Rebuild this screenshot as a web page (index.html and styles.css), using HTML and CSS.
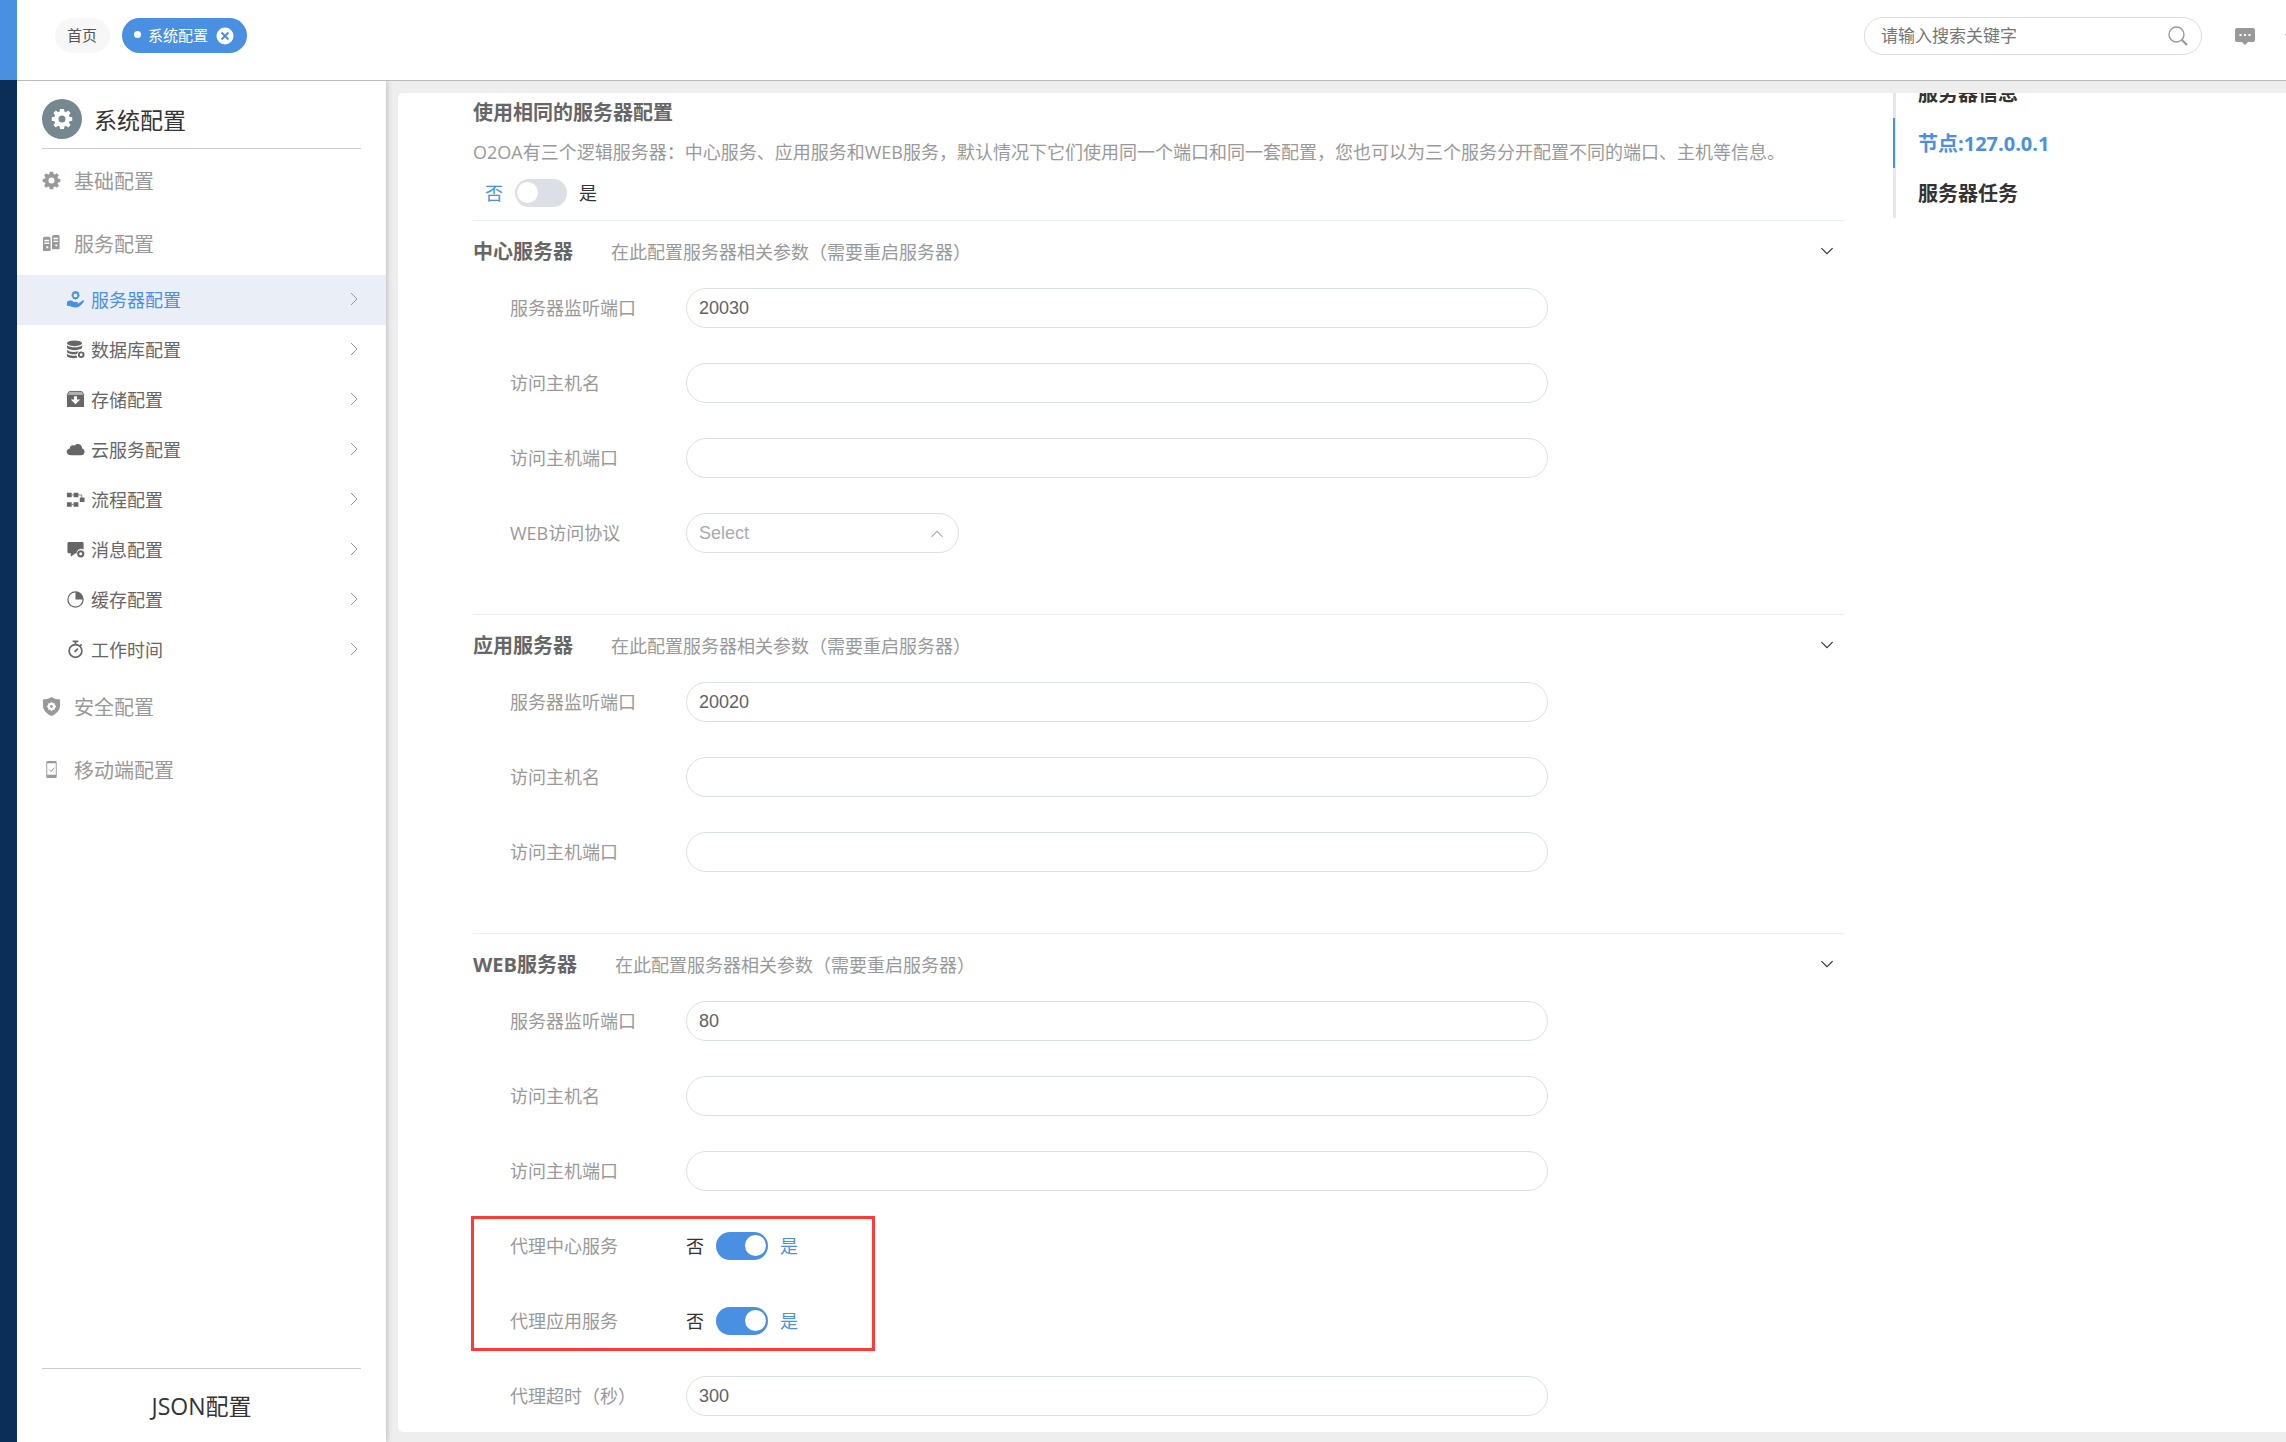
FILE: index.html
```html
<!DOCTYPE html>
<html lang="zh-CN">
<head>
    <meta charset="UTF-8">
    <meta name="viewport" content="width=device-width, initial-scale=1.0">
    <title>系统配置</title>
    <link rel="stylesheet" href="styles.css">
</head>
<body>
    <!-- Shared icon shapes -->
    <svg class="sprite" aria-hidden="true">
        <symbol id="gear" viewBox="0 0 20 20">
            <path fill-rule="evenodd" d="M8.2 0.8h3.6l.4 2.4 1.4.6 2-1.5 2.2 2.2-1.5 2 .6 1.4 2.4.4v3.4l-2.4.4-.6 1.4 1.5 2-2.2 2.2-2-1.5-1.4.6-.4 2.4H8.2l-.4-2.4-1.4-.6-2 1.5-2.2-2.2 1.5-2-.6-1.4-2.4-.4V8.300l2.400-.4.6-1.400-1.500-2L4.400 2.300l2 1.500 1.400-.6zM10 6.800a3.200 3.200 0 1 0 0 6.400 3.200 3.200 0 0 0 0-6.400z"/>
        </symbol>
        <symbol id="arrow" viewBox="0 0 8 14">
            <path d="M1 1l6 6-6 6" fill="none" stroke="currentColor"/>
        </symbol>
        <symbol id="chevron" viewBox="0 0 12 8">
            <path d="M1 1l5 5 5-5" fill="none" stroke="currentColor"/>
        </symbol>
    </svg>

    <div class="app">
        <div class="rail"></div>

        <header class="header">
            <nav class="tabs">
                <a class="tab" href="#">首页</a>
                <a class="tab active" href="#">
                    <span class="dot"></span>系统配置
                    <svg class="tab-close" viewBox="0 0 18 18"><circle cx="9" cy="9" r="8.500" fill="#fff"/><path d="M5.500 5.500l7 7M12.500 5.500l-7 7" stroke="#4a90e2" stroke-width="2"/></svg>
                </a>
            </nav>
            <div class="header-right">
                <form class="search">
                    <input type="text" placeholder="请输入搜索关键字" aria-label="搜索">
                    <button type="button" aria-label="搜索">
                        <svg viewBox="0 0 20 20"><circle cx="8.500" cy="8.500" r="7.500" fill="none" stroke="currentColor" stroke-width="1.400"/><path d="M14 14l5 5" stroke="currentColor" stroke-width="2.200"/></svg>
                    </button>
                </form>
                <button class="icon-btn" type="button" aria-label="消息">
                    <svg viewBox="0 0 20 17"><path fill="currentColor" d="M2 0h16a2 2 0 0 1 2 2v10a2 2 0 0 1-2 2h-5l-3 3-3-3H2a2 2 0 0 1-2-2V2a2 2 0 0 1 2-2z"/><path fill="#fff" d="M4.500 6h2v2h-2zM9 6h2v2H9zM13.500 6h2v2h-2z"/></svg>
                </button>
                <button class="icon-btn" type="button" aria-label="更多">
                    <svg viewBox="0 0 20 17"><path d="M0 6.500L2 5h16v4H2z" fill="currentColor"/></svg>
                </button>
            </div>
        </header>

        <aside class="sidebar">
            <div class="sidebar-title">
                <span class="title-icon"><svg><use href="#gear"/></svg></span>
                <h1>系统配置</h1>
            </div>
            <nav class="menu">
                <a class="menu-group" href="#"><svg><use href="#gear"/></svg>基础配置</a>
                <a class="menu-group" href="#">
                    <svg viewBox="0 0 20 20"><path fill-rule="evenodd" d="M1 4l2-1h5l1 1v14H1zm1.500 2v1.500h5V6zm0 3v1.500h5V9zm2 4v2h2v-2zM10.500 2l2-1h5l1 1v14h-8zM12 4v1.500h5V4zm0 3v1.500h5V7zm2 4v2h2v-2z"/></svg>服务配置
                </a>
                <a class="menu-item active" href="#">
                    <svg viewBox="0 0 20 20"><path fill-rule="evenodd" d="M9 1h2l.5 1 1.200-.3 1 1.300-.3 1.200.9.800v1.500l-1 .6v1.300L12 9.600l-1-.2-1 .8-1-.8-1.200.2-1-1.200V7.100l-1-.6V5l.9-.8-.2-1.200 1-1.300 1.100.3zM10 3.700a2 2 0 1 0 0 4 2 2 0 0 0 0-4z"/><path d="M1 12.500c3-2 5.500-1.500 7 0h3.500c1.500 0 1.500 2 0 2h-2.500 3.500l5-3.500c1.500-.5 2 .5 1 1.500-2.500 3.500-5 6-8.500 6-3 0-5-2-9-2z"/></svg>
                    <span>服务器配置</span><svg class="arrow"><use href="#arrow"/></svg>
                </a>
                <a class="menu-item" href="#">
                    <svg viewBox="0 0 20 20"><ellipse cx="9" cy="3.500" rx="8" ry="3"/><path d="M1 5.500c3 3 13 3 16 0v3c-3 3-13 3-16 0zM1 10.300c3 2.700 8 2.700 12 1.500l-1.500 3c-4 .5-8.500 0-10.500-2zM1 14.500c3 2.200 6 2.200 10 1.700l1 2.500c-4 1-9 .5-11-1.500z"/><circle cx="16" cy="15.500" r="2.500" fill="none" stroke="currentColor" stroke-width="2" /></svg>
                    <span>数据库配置</span><svg class="arrow"><use href="#arrow"/></svg>
                </a>
                <a class="menu-item" href="#">
                    <svg viewBox="0 0 20 20"><path opacity=".5" d="M3.500 1.500h13L19 5H1z"/><path fill-rule="evenodd" d="M1 5h18v13H1zm7.500 1.500V10H5l5 5 5-5h-3.500V6.500z"/><path d="M1 5l2.500-3.500h13L19 5" fill="none" stroke="currentColor"/></svg>
                    <span>存储配置</span><svg class="arrow"><use href="#arrow"/></svg>
                </a>
                <a class="menu-item" href="#">
                    <svg viewBox="0 0 20 20"><path d="M5 16c-5 0-6-6-1-7 0-3 3-4 5-3 2-3 8-2 8 3 4 1 3 7-1 7z"/></svg>
                    <span>云服务配置</span><svg class="arrow"><use href="#arrow"/></svg>
                </a>
                <a class="menu-item" href="#">
                    <svg viewBox="0 0 20 20"><path d="M1 3h5v4.500H1zM8 3h5v4.500H8zM14.500 8h5v4.500h-5zM1 13h5v4.500H1zM8 13h5v4.500H8z"/><path d="M6 5.200h2M6 15.200h2M13 5.200h3.500V8" fill="none" stroke="currentColor" stroke-width=".8"/></svg>
                    <span>流程配置</span><svg class="arrow"><use href="#arrow"/></svg>
                </a>
                <a class="menu-item" href="#">
                    <svg viewBox="0 0 20 20"><path d="M3 2h14a1.500 1.500 0 0 1 1.500 1.500V10a5 5 0 0 0-7.500 4.500L10 14l-5 3.500V14H3a1.500 1.500 0 0 1-1.500-1.500v-9A1.500 1.500 0 0 1 3 2z"/><circle cx="15.500" cy="14.500" r="2.700" fill="none" stroke="currentColor" stroke-width="2.200"/></svg>
                    <span>消息配置</span><svg class="arrow"><use href="#arrow"/></svg>
                </a>
                <a class="menu-item" href="#">
                    <svg viewBox="0 0 20 20"><circle cx="10" cy="10" r="8" fill="none" stroke="currentColor" stroke-width="1.300"/><path d="M10 2a8 8 0 0 1 8 8h-8z"/></svg>
                    <span>缓存配置</span><svg class="arrow"><use href="#arrow"/></svg>
                </a>
                <a class="menu-item" href="#">
                    <svg viewBox="0 0 20 20"><g fill="none" stroke="currentColor" stroke-width="1.800"><circle cx="10" cy="11.500" r="6.700"/><path d="M7 1.500h6M10 1.500V5M15 6l1.500-1.500M9 12.500l3.500-3.500"/></g></svg>
                    <span>工作时间</span><svg class="arrow"><use href="#arrow"/></svg>
                </a>
                <a class="menu-group" href="#">
                    <svg viewBox="0 0 20 20"><path fill-rule="evenodd" d="M10 0c3 2 6 2.500 9 2.500V9c0 5-4 9-9 11-5-2-9-6-9-11V2.500C4 2.500 7 2 10 0zm0 5L8.500 6.500h-2v2L5 10l1.500 1.500v2h2L10 15l1.500-1.500h2v-2L15 10l-1.500-1.500v-2h-2zm0 3.500a1.500 1.500 0 1 1 0 3 1.500 1.500 0 0 1 0-3z"/></svg>安全配置
                </a>
                <a class="menu-group" href="#">
                    <svg viewBox="0 0 20 20"><path fill-rule="evenodd" d="M6 1h8a1.500 1.500 0 0 1 1.500 1.500v15A1.500 1.500 0 0 1 14 19H6a1.500 1.500 0 0 1-1.500-1.500v-15A1.500 1.500 0 0 1 6 1zM5.500 3.500v12h9v-12z"/><path d="M7.500 10l2 2 3.500-4" fill="none" stroke="currentColor"/></svg>移动端配置
                </a>
            </nav>
            <a class="sidebar-footer" href="#">JSON配置</a>
        </aside>

        <main class="main">
            <div class="card">
                <div class="content">
                    <section class="intro">
                        <h2>使用相同的服务器配置</h2>
                        <p>O2OA有三个逻辑服务器：中心服务、应用服务和WEB服务，默认情况下它们使用同一个端口和同一套配置，您也可以为三个服务分开配置不同的端口、主机等信息。</p>
                        <label class="switch"><span class="off">否</span><input type="checkbox"><span class="on">是</span></label>
                    </section>

                    <section class="server">
                        <div class="server-head">
                            <h2>中心服务器</h2>
                            <p>在此配置服务器相关参数（需要重启服务器）</p>
                            <button type="button" aria-label="收起"><svg><use href="#chevron"/></svg></button>
                        </div>
                        <div class="row"><label for="centerPort">服务器监听端口</label><input type="text" id="centerPort" value="20030"></div>
                        <div class="row"><label for="centerHost">访问主机名</label><input type="text" id="centerHost"></div>
                        <div class="row"><label for="centerProxyPort">访问主机端口</label><input type="text" id="centerProxyPort"></div>
                        <div class="row">
                            <label for="protocol">WEB访问协议</label>
                            <div class="select">
                                <select id="protocol"><option>Select</option><option>http</option><option>https</option></select>
                                <svg><use href="#chevron"/></svg>
                            </div>
                        </div>
                    </section>

                    <section class="server">
                        <div class="server-head">
                            <h2>应用服务器</h2>
                            <p>在此配置服务器相关参数（需要重启服务器）</p>
                            <button type="button" aria-label="收起"><svg><use href="#chevron"/></svg></button>
                        </div>
                        <div class="row"><label for="appPort">服务器监听端口</label><input type="text" id="appPort" value="20020"></div>
                        <div class="row"><label for="appHost">访问主机名</label><input type="text" id="appHost"></div>
                        <div class="row"><label for="appProxyPort">访问主机端口</label><input type="text" id="appProxyPort"></div>
                    </section>

                    <section class="server">
                        <div class="server-head">
                            <h2>WEB服务器</h2>
                            <p>在此配置服务器相关参数（需要重启服务器）</p>
                            <button type="button" aria-label="收起"><svg><use href="#chevron"/></svg></button>
                        </div>
                        <div class="row"><label for="webPort">服务器监听端口</label><input type="text" id="webPort" value="80"></div>
                        <div class="row"><label for="webHost">访问主机名</label><input type="text" id="webHost"></div>
                        <div class="row"><label for="webProxyPort">访问主机端口</label><input type="text" id="webProxyPort"></div>
                        <div class="highlight">
                            <div class="row"><label for="proxyCenter">代理中心服务</label><div class="switch"><span class="off">否</span><input type="checkbox" id="proxyCenter" checked><span class="on">是</span></div></div>
                            <div class="row"><label for="proxyApp">代理应用服务</label><div class="switch"><span class="off">否</span><input type="checkbox" id="proxyApp" checked><span class="on">是</span></div></div>
                        </div>
                        <div class="row"><label for="timeout">代理超时（秒）</label><input type="text" id="timeout" value="300"></div>
                    </section>
                </div>

                <nav class="anchors">
                    <a href="#">服务器信息</a>
                    <a class="active" href="#">节点:127.0.0.1</a>
                    <a href="#">服务器任务</a>
                </nav>
            </div>
        </main>
    </div>
</body>
</html>
```

FILE: styles.css
```css
*,
*::before,
*::after {
    margin: 0;
    padding: 0;
    box-sizing: border-box;
}

body {
    font-family: "Open Sans", "Noto Sans CJK SC", sans-serif;
    font-size: 18px;
    color: #333;
    background-color: #fff;
}

a {
    color: inherit;
    text-decoration: none;
}

button {
    border: none;
    background: none;
    cursor: pointer;
}

svg {
    fill: currentColor;
    flex: none;
}

.sprite {
    display: none;
}

.app {
    display: grid;
    grid-template-columns: 17px 369px minmax(0, 1fr);
    grid-template-rows: 81px minmax(0, 1fr);
    height: 100vh;
    overflow: hidden;
}

.rail {
    grid-row: 1 / 3;
    background: linear-gradient(#4a90e2 80px, #0a2e57 80px);
}

/* Header */
.header {
    grid-column: 2 / 4;
    display: flex;
    justify-content: space-between;
    align-items: flex-start;
    padding: 17px 0 0 38px;
    border-bottom: 1px solid #bbb;
    overflow: hidden;
}

.tabs {
    display: flex;
    gap: 12px;
    padding-top: 1px;
}

.tab {
    display: flex;
    align-items: center;
    height: 35px;
    padding: 0 13px 2px 12px;
    border-radius: 18px;
    background-color: #f7f7f7;
    font-size: 15px;
    color: #555;
}

.tab.active {
    background-color: #4a90e2;
    color: #fff;
}

.dot {
    width: 7px;
    height: 7px;
    margin-right: 7px;
    border-radius: 50%;
    background-color: #fff;
}

.tab-close {
    width: 18px;
    height: 18px;
    margin: 2px 0 0 8px;
}

.header-right {
    display: flex;
    align-items: center;
    margin-right: -19px;
}

.search {
    display: flex;
    align-items: center;
    width: 338px;
    height: 38px;
    margin-right: 33px;
    padding: 0 13px 0 16px;
    border: 1px solid #ddd;
    border-radius: 19px;
}

.search input {
    flex: 1;
    min-width: 0;
    padding-bottom: 2px;
    border: none;
    outline: none;
    background: none;
    font: inherit;
    font-size: 17px;
}

.search input::placeholder {
    color: #757575;
}

.search button,
.search svg {
    width: 20px;
    height: 20px;
    color: #999;
}

.icon-btn {
    display: flex;
    margin-right: 30px;
    color: #999;
}

.icon-btn:last-child {
    margin-right: 0;
}

.icon-btn svg {
    width: 20px;
    height: 17px;
}

/* Sidebar */
.sidebar {
    display: flex;
    flex-direction: column;
    min-height: 0;
    box-shadow: 0 0 6px rgba(0, 0, 0, 0.3);
    clip-path: inset(0 -8px 0 0);
    z-index: 1;
    background-color: #fff;
}

.sidebar-title {
    display: flex;
    align-items: center;
    gap: 12px;
    height: 68px;
    margin: 0 25px;
    padding-top: 8px;
    border-bottom: 1px solid #ccc;
}

.sidebar-title h1 {
    font-size: 23px;
    font-weight: 400;
}

.title-icon {
    display: flex;
    align-items: center;
    justify-content: center;
    width: 40px;
    height: 40px;
    border-radius: 50%;
    background-color: #758790;
    color: #fff;
}

.title-icon svg {
    width: 22px;
    height: 22px;
}

.menu {
    flex: 1;
}

.menu-group {
    display: flex;
    align-items: center;
    gap: 13px;
    height: 63px;
    padding: 0 25px;
    font-size: 20px;
    color: #999;
}

.menu-group svg {
    width: 19px;
    height: 19px;
}

.menu-item {
    display: flex;
    align-items: center;
    gap: 6px;
    height: 50px;
    padding: 0 28px 2px 49px;
    color: #666;
}

.menu-item span {
    flex: 1;
}

.menu-item svg {
    width: 19px;
    height: 19px;
}

.menu-item .arrow {
    width: 8px;
    height: 14px;
    color: #999;
}

.menu-item.active {
    background-color: #eaeff7;
    color: #4a90e2;
}

.sidebar-footer {
    height: 74px;
    margin: 0 25px;
    border-top: 1px solid #ccc;
    font-size: 23px;
    line-height: 74px;
    text-align: center;
}

/* Main panel */
.main {
    padding: 12px 0 10px 12px;
    background-color: #eee;
}

.card {
    display: flex;
    gap: 49px;
    height: 100%;
    padding-left: 75px;
    border-radius: 5px 0 0 5px;
    background-color: #fff;
    overflow: hidden;
}

.content {
    flex: 1;
    min-width: 0;
}

h2 {
    font-size: 20px;
    font-weight: 700;
    line-height: 28px;
    color: #666;
}

p {
    line-height: 28px;
    color: #999;
}

.intro {
    height: 127px;
    padding-top: 6px;
}

.intro p {
    margin: 11px 0 13px;
}

.intro .switch {
    display: inline-flex;
    height: 28px;
    padding-left: 12px;
}

.server {
    padding-bottom: 26px;
    border-top: 1px solid #ebeef5;
}

.server-head {
    display: flex;
    align-items: center;
    height: 67px;
    padding: 0 10px 6px 0;
}

.server-head p {
    flex: 1;
    margin-left: 38px;
}

.server-head svg {
    width: 14px;
    height: 9px;
    color: #333;
}

.row {
    display: flex;
    align-items: center;
    height: 40px;
    margin-bottom: 35px;
    padding-left: 37px;
}

.row label {
    flex: none;
    width: 176px;
    padding-bottom: 2px;
    color: #999;
}

.row input[type="text"],
.row select {
    width: 100%;
    height: 40px;
    padding: 0 12px;
    border: 1px solid #dcdfe6;
    border-radius: 20px;
    outline: none;
    background-color: #fff;
    font-family: "Liberation Sans", sans-serif;
    font-size: 18px;
    color: #606266;
}

.row input[type="text"] {
    max-width: 862px;
}

.select {
    position: relative;
    width: 273px;
}

.row select {
    appearance: none;
    color: #a8abb2;
}

.select svg {
    position: absolute;
    top: 16px;
    right: 15px;
    width: 14px;
    height: 9px;
    color: #a8abb2;
    transform: rotate(180deg);
    pointer-events: none;
}

/* Switch */
.switch {
    display: flex;
    align-items: center;
    gap: 12px;
}

.switch span {
    padding-bottom: 2px;
}

.switch input {
    appearance: none;
    width: 52px;
    height: 28px;
    padding: 3px 2px;
    border-radius: 14px;
    background-color: #dcdfe6;
}

.switch input::before {
    content: "";
    display: block;
    width: 21px;
    height: 21px;
    border-radius: 50%;
    background-color: #fff;
}

.switch input:checked {
    background-color: #4a90e2;
}

.switch input:checked::before {
    margin-left: auto;
}

.switch:has(:checked) .on,
.switch:not(:has(:checked)) .off {
    color: #4a90e2;
}

.highlight {
    position: relative;
}

.highlight::after {
    content: "";
    position: absolute;
    top: -10px;
    left: -2px;
    width: 404px;
    height: 135px;
    border: 3px solid #ff3838;
    pointer-events: none;
}

/* Anchor list */
.anchors {
    align-self: flex-start;
    width: 393px;
    margin-top: -25px;
    border-left: 3px solid #e4e7ed;
}

.anchors a {
    display: block;
    height: 50px;
    margin-left: -3px;
    padding-left: 23px;
    border-left: 2px solid transparent;
    font-size: 20px;
    font-weight: 700;
    line-height: 52px;
}

.anchors a.active {
    border-left-color: #4a90e2;
    color: #4a90e2;
}
```
